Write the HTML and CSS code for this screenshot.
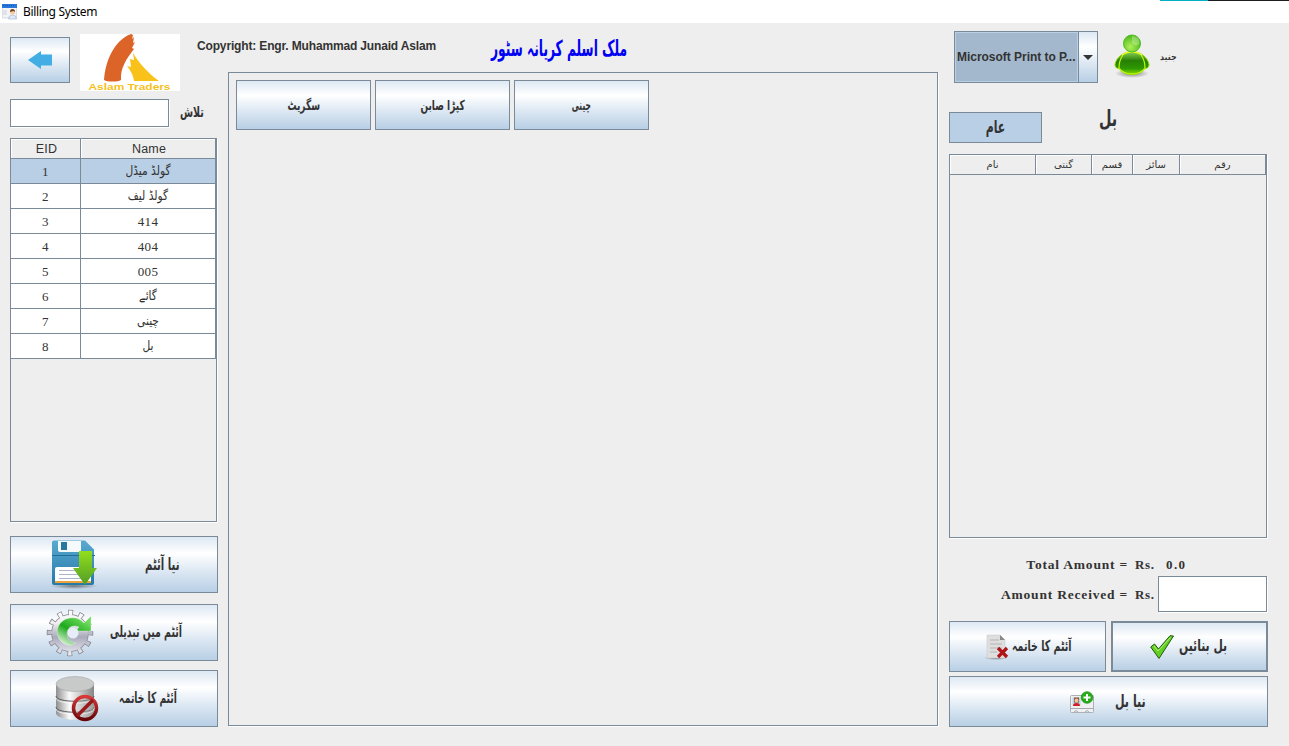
FILE: index.html
```html
<!DOCTYPE html>
<html lang="en">
<head>
<meta charset="utf-8">
<title>Billing System</title>
<link rel="stylesheet" href="styles.css">
</head>
<body>
<svg width="0" height="0" class="defs" aria-hidden="true">
  <defs>
    <linearGradient id="blue" x1="0" y1="0" x2="0" y2="1"><stop offset="0" stop-color="#5aa9d0"/><stop offset="1" stop-color="#237aa8"/></linearGradient>
    <linearGradient id="green" x1="0" y1="0" x2="0" y2="1"><stop offset="0" stop-color="#92de1c"/><stop offset="1" stop-color="#519d27"/></linearGradient>
    <linearGradient id="silver" x1="0" y1="0" x2="1" y2="0"><stop offset="0" stop-color="#8e8e8e"/><stop offset=".35" stop-color="#fafafa"/><stop offset=".6" stop-color="#d2d2d2"/><stop offset="1" stop-color="#858585"/></linearGradient>
    <linearGradient id="gear" gradientUnits="userSpaceOnUse" x1="0" y1="0" x2="0" y2="48"><stop offset="0" stop-color="#fff"/><stop offset=".3" stop-color="#eee"/><stop offset=".58" stop-color="#aaaabd"/><stop offset="1" stop-color="#f2f2f6"/></linearGradient>
    <linearGradient id="swirl" gradientUnits="userSpaceOnUse" x1="34" y1="8" x2="17" y2="36"><stop offset="0" stop-color="#6fdb60"/><stop offset=".5" stop-color="#1eaa1c"/><stop offset="1" stop-color="#e4f7e1"/></linearGradient>
    <linearGradient id="ban" x1="0" y1="0" x2="0" y2="1"><stop offset="0" stop-color="#d83a3a"/><stop offset="1" stop-color="#650508"/></linearGradient>
    <linearGradient id="body" x1="0" y1="0" x2="0" y2="1"><stop offset="0" stop-color="#8ed45a"/><stop offset=".4" stop-color="#277f05"/><stop offset=".75" stop-color="#2f9a00"/><stop offset="1" stop-color="#8de300"/></linearGradient>
    <radialGradient id="head" cx=".4" cy=".7" r=".7"><stop offset="0" stop-color="#b2ee5a"/><stop offset="1" stop-color="#48b91a"/></radialGradient>
    <radialGradient id="shade"><stop offset="0" stop-color="#444" stop-opacity=".65"/><stop offset="1" stop-color="#444" stop-opacity="0"/></radialGradient>
  </defs>
</svg>
<header class="titlebar">
  <svg class="app-icon" viewBox="0 0 16 16" width="16" height="16"><path d="M.5 1h14v13H.5z" fill="#f4f4f4" stroke="#c5cbd6" stroke-width=".6"/><path d="M0 0h15v4H0z" fill="#2878dc"/><path d="M1 1.500h12" stroke="#1455b8" stroke-dasharray="1 1"/><path d="M2 6v5M4 6v5" stroke="#cbd3df"/><path d="M6.500 15q0-4 4-4t4 4z" fill="#dce9fa" stroke="#92a7c6" stroke-width=".5"/><circle cx="10.500" cy="8.300" r="2.500" fill="#f3cda7"/><path d="M8 8q0-3 2.500-3T13 8l-1.500-1z" fill="#71401e"/></svg>
  <span class="title">Billing System</span>
  <i class="edge"></i>
</header>
<main class="app">
  <section class="left">
    <div class="brand">
      <button class="btn back"><svg viewBox="0 0 24 18" width="24" height="18"><path d="M0 9 13 0v3.500h11v11H13V18z" fill="#42aee4"/></svg></button>
      <svg class="logo" viewBox="0 0 100 57" width="100" height="57"><path fill="#fff" d="M0 0h100v57H0z"/><path d="M24 46c1-18 10-40 27-46l2 1-1 4 2-2-1 6 2-1-3 6 2 1c-7 9-14 19-13 31-3 2-14 2-17 0z" fill="#dd6428"/><path d="M54 47c-1-7-4-11-7-15l4 1-1-8 4 1-1-7c6 10 15 20 26 28z" fill="#f8c21b"/><text x="8.500" y="55.800" textLength="82" lengthAdjust="spacingAndGlyphs" class="logo-text">Aslam Traders</text></svg>
    </div>
    <div class="search"><input class="field" aria-label="تلاش"><label class="ur search-label">تلاش</label></div>
    <div class="pane items">
      <table class="item-table">
        <thead><tr><th class="id">EID</th><th>Name</th></tr></thead>
        <tbody>
          <tr class="selected"><td>1</td><td><span class="ur">گولڈ میڈل</span></td></tr>
          <tr><td>2</td><td><span class="ur">گولڈ لیف</span></td></tr>
          <tr><td>3</td><td>414</td></tr>
          <tr><td>4</td><td>404</td></tr>
          <tr><td>5</td><td>005</td></tr>
          <tr><td>6</td><td><span class="ur">گائے</span></td></tr>
          <tr><td>7</td><td><span class="ur">چینی</span></td></tr>
          <tr><td>8</td><td><span class="ur">بل</span></td></tr>
        </tbody>
      </table>
    </div>
    <div class="actions">
      <button class="btn act add"><svg viewBox="0 0 48 48" width="48" height="48"><ellipse cx="24" cy="45" rx="24" ry="3" fill="url(#shade)"/><path d="M4-.5h31l9 9V42q0 2-2 2H4q-2 0-2-2V1.500q0-2 2-2z" fill="url(#blue)"/><path d="M2 14.500h43" stroke="#216f99"/><path d="M8 0h23v9q0 2-2 2H10q-2 0-2-2z" fill="#f7fafb"/><path d="M11 1h6v8h-6z" fill="#27799f"/><path d="M7 26h34v15H5V28q0-2 2-2z" fill="#fff"/><path d="M5 40h36v2H5z" fill="#eda33a"/><path d="M9 29.500h25M9 33.500h25M9 37.500h25" stroke="#abb7c8"/><path d="M29 10h13v17h5L35 44 23 27h6z" fill="url(#green)"/></svg><span class="ur">نیا آئٹم</span></button>
      <button class="btn act edit"><svg viewBox="0 0 48 48" width="48" height="48"><g fill="none"><circle cx="24" cy="24" r="20.500" stroke="#85858f" stroke-width="5.500" stroke-dasharray="4.930 5.803" stroke-dashoffset="2.460"/><circle cx="24" cy="24" r="14" stroke="#85858f" stroke-width="9.500"/><circle cx="24" cy="24" r="20" stroke="url(#gear)" stroke-width="5" stroke-dasharray="3.500 6.972" stroke-dashoffset="1.750"/><circle cx="24" cy="24" r="14" stroke="url(#gear)" stroke-width="8"/></g><circle cx="24" cy="24" r="12" fill="url(#gear)"/><path d="M22 36C9 33 7 16 20 10q11-4 18 4l7-7v15H30l3-4c-7-3-12 1-12 7 0 5 4 9 9 9q-4 3-8 2z" fill="url(#swirl)" stroke="#fff" stroke-opacity=".5" stroke-width=".6"/><circle cx="27" cy="24" r="5.500" fill="#e5edf6"/></svg><span class="ur">آئٹم میں تبدیلی</span></button>
      <button class="btn act del"><svg viewBox="0 0 48 48" width="48" height="48"><path d="M4 10v28c0 9 38 9 38 0V10z" fill="url(#silver)"/><path d="M4 21c0 7 38 7 38 0M4 32c0 7 38 7 38 0" fill="none" stroke="#5f5f5f"/><path d="M4 23c0 7 38 7 38 0M4 34c0 7 38 7 38 0" fill="none" stroke="#fff" stroke-width=".7"/><ellipse cx="23" cy="9" rx="19" ry="7.500" fill="#c8caca" stroke="#9b9b9b" stroke-width=".5"/><circle cx="33" cy="33" r="11.500" fill="#ddd" fill-opacity=".25" stroke="url(#ban)" stroke-width="3.500"/><path d="m25 41 16-16" stroke="#98191b" stroke-width="3.500"/></svg><span class="ur">آئٹم کا خاتمہ</span></button>
    </div>
  </section>

  <section class="center">
    <div class="heading"><span class="copyright">Copyright: Engr. Muhammad Junaid Aslam</span><h1 class="ur store">ملک اسلم کریانہ سٹور</h1></div>
    <div class="pane catalog">
      <button class="btn cat"><span class="ur cat-a">سگریٹ</span></button>
      <button class="btn cat"><span class="ur cat-b">کپڑا صابن</span></button>
      <button class="btn cat"><span class="ur cat-c">چینی</span></button>
    </div>
  </section>

  <section class="right">
    <div class="user-row">
      <div class="combo"><span class="combo-value">Microsoft Print to P...</span><span class="combo-arrow"><svg viewBox="0 0 10 5" width="10" height="5"><path d="M0 0h10L5 5z" fill="#333"/></svg></span></div>
      <svg class="avatar" viewBox="0 0 36 44" width="36" height="44"><ellipse cx="18" cy="39.500" rx="17" ry="4.500" fill="url(#shade)"/><path d="M18 17.500c8 0 16 6 17 13 0 3-2 4-4 4-6 8-20 8-26 0-2 0-4-1-4-4 1-7 9-13 17-13z" fill="url(#body)" stroke="#8fd800"/><path d="M9 21c-3 4-4 8-4 13 6 8 20 8 26 0 0-5-1-9-4-13" fill="none" stroke="#c4fa00" stroke-width="1.200"/><path d="M8 21q10-6.500 20 0" fill="none" stroke="#e8ff20" stroke-width="1.300"/><circle cx="18" cy="9.500" r="8.500" fill="url(#head)" stroke="#4fbd20"/><path d="M18 9V2c6 0 8 4 7 8-2 2-4 2-7-1z" fill="#d8f5b9" opacity=".4"/></svg>
      <span class="ur user">جنید</span>
    </div>
    <div class="bill-row"><button class="type"><span class="ur">عام</span></button><span class="ur bill">بل</span></div>
    <div class="pane bill-pane">
      <div class="bill-head ur"><span>نام</span><span>گنتی</span><span>قسم</span><span>سائز</span><span>رقم</span></div>
    </div>
    <div class="totals">
      <div class="line"><span class="caption">Total Amount =</span><span class="rs">Rs.</span><span class="amount">0.0</span></div>
      <div class="line received"><span class="caption">Amount Received =</span><span class="rs">Rs.</span><input class="field" aria-label="Amount Received"></div>
    </div>
    <div class="bill-actions">
      <button class="btn remove"><svg viewBox="0 0 24 26" width="24" height="26"><ellipse cx="11" cy="24" rx="12" ry="2" fill="url(#shade)"/><path d="M2 1h13l5 5v18H2z" fill="#dedede" stroke="#c5c5c5" stroke-width=".5"/><path d="m15 1 5 5h-5z" fill="#888"/><path d="M5 6h9M5 10h12M5 14h12M5 18h7" stroke="#b4b4b4"/><path d="m13 14 9 9m0-9-9 9" stroke="#af1517" stroke-width="3.200"/></svg><span class="ur">آئٹم کا خاتمہ</span></button>
      <button class="btn make"><svg viewBox="0 0 24 24" width="24" height="24"><path d="M.7 12 4.500 9l4 5L20 .7l3.500.3L9 23.500z" fill="#62cf23" stroke="#245815"/><path d="m4 11 4 5L20.500 2.500" stroke="#b7ef75" fill="none"/></svg><span class="ur">بل بنائیں</span></button>
      <button class="btn new"><svg viewBox="0 0 24 22" width="24" height="22"><rect x=".5" y="4.500" width="23" height="17" rx="1" fill="#f0f0f1" stroke="#acb1b8"/><path d="M2.500 6.500h8v8h-8z" fill="#b7d1ee"/><path d="M4 6.500h5v5H4z" fill="#8a5630"/><circle cx="6.500" cy="9.500" r="2" fill="#f3c39a"/><path d="M3 15q0-3 3.500-3T10 15z" fill="#cf2020"/><path d="M1 17.500h22M4 21q2-3 4 0M15 21q2-3 4 0" stroke="#a4a9af" fill="none"/><circle cx="17" cy="6.500" r="5.800" fill="#24ad17" stroke="#168611" stroke-width=".7"/><path d="M17 3v7M13.500 6.500h7" stroke="#fff" stroke-width="2"/></svg><span class="ur">نیا بل</span></button>
    </div>
  </section>
</main>
</body>
</html>
```

FILE: styles.css
```css
* { box-sizing: border-box; }
body { margin: 0; width: 1289px; height: 746px; overflow: hidden; background: #eee; color: #333; font-family: "Liberation Sans", Arial, sans-serif; font-size: 12px; }
svg { display: block; flex: none; overflow: visible; }
.defs { position: absolute; }
.ur { font-family: "DejaVu Sans", sans-serif; direction: rtl; unicode-bidi: isolate; white-space: nowrap; }
button { font: inherit; color: inherit; padding: 0; margin: 0; }
.btn { display: flex; align-items: center; justify-content: center; border: 1px solid #7a8a99; background: linear-gradient(#dde8f3 0%, #fff 30%, #dde8f3 62%, #b8cfe5 100%); }
.field { border: 1px solid #7a8a99; background: #fff; box-shadow: 1px 1px 0 #fff; padding: 2px; margin: 0; border-radius: 0; }
.pane { border: 1px solid #7a8a99; box-shadow: 1px 1px 0 #fff; }

.titlebar { position: relative; display: flex; align-items: center; height: 23px; padding-left: 2px; background: #fff; }
.title { margin-left: 5px; color: #000; font: 12px "Noto Sans", sans-serif; letter-spacing: -.34px; }
.edge { position: absolute; right: 0; top: 0; width: 129px; height: 1px; background: linear-gradient(90deg, #00b1c5 48px, #1c1c1c 48px); }

.app { display: grid; grid-template-columns: 208px 710px 319px; column-gap: 10.500px; padding-left: 10px; }
.center { margin-left: -.5px; width: 710px; }

.brand { display: flex; padding-top: 11px; height: 76px; gap: 10px; }
.back { width: 60px; height: 46px; margin-top: 3px; }
.logo-text { font: bold 8.500px "Liberation Sans", sans-serif; fill: #f6c11c; }
.search { display: flex; align-items: center; height: 28px; }
.search .field { width: 159px; height: 28px; }
.search-label { margin: -2px 0 0 11px; font-size: 13px; font-weight: bold; line-height: 20px; transform: scale(.73, 1.15); transform-origin: left center; }
.items { width: 207px; height: 384px; margin-top: 11px; }
.item-table { width: 205px; border-collapse: separate; border-spacing: 0; table-layout: fixed; }
.item-table th { height: 20px; padding: 2px 0 0 2px; font-size: 12.500px; letter-spacing: .2px; font-weight: normal; line-height: 17px; border-right: 1px solid #7a8a99; border-bottom: 1px solid #7a8a99; box-shadow: inset 1px 1px 0 #fff; }
.item-table .id { width: 70px; }
.item-table td { height: 25px; padding: 1px 0 0; text-align: center; font-family: "Liberation Serif", serif; font-size: 13px; line-height: 22px; letter-spacing: .4px; background: #fff; border-right: 1px solid #7a8a99; border-bottom: 1px solid #7a8a99; }
.item-table .ur { display: block; margin-top: -1px; letter-spacing: 0; font-size: 13px; transform: scaleX(.82); }
.item-table .selected td { background: #b8cfe5; }
.actions { display: grid; grid-template-rows: 68px 66px 57px; margin-top: 14px; }
.act { height: 57px; justify-content: flex-start; font-size: 14px; font-weight: bold; }
.act .ur { transform: scale(.72, 1.2); transform-origin: left center; }
.add { padding-left: 39px; }
.add span { margin: -2px 0 0 47px; }
.edit { padding-left: 35px; }
.edit span { margin: -2px 0 0 16px; font-size: 13px; }
.del { padding-left: 41px; }
.del span { margin: -2px 0 0 19px; font-size: 12.700px; }

.heading { display: flex; height: 49px; }
.copyright { flex: none; margin-left: -31px; padding-top: 16px; width: 240px; font-weight: bold; font-size: 12px; letter-spacing: -.155px; white-space: nowrap; }
.store { margin: 11px 0 0 54px; color: #0000f5; font-size: 17px; line-height: 30px; transform: scale(.72, 1.3); transform-origin: left center; }
.catalog { display: flex; gap: 4px; width: 710px; height: 654px; padding: 7px; }
.cat { width: 135px; height: 50px; font-size: 12px; font-weight: bold; }
.cat .ur { transform: scale(.75, 1.15); }
.cat .cat-c { transform: scale(.62, 1.15); }

.user-row { display: flex; align-items: center; height: 52px; margin: 8px 0 0 5px; }
.combo { display: flex; width: 144px; height: 52px; border: 1px solid #7a8a99; }
.combo-value { width: 124px; padding-left: 1px; border: 1px solid #b8cfe5; background: #a3b8cc; font-weight: bold; letter-spacing: -.03px; line-height: 49px; white-space: nowrap; }
.combo-arrow { display: flex; align-items: center; justify-content: center; width: 19px; border-left: 1px solid #7a8a99; background: linear-gradient(#dde8f3, #fff 30%, #dde8f3 62%, #b8cfe5); }
.avatar { margin: -3px 0 0 16px; }
.user { margin-left: 10px; font-size: 9px; font-weight: bold; transform: scaleX(.88); transform-origin: left center; }
.bill-row { display: flex; height: 60px; margin-top: 11px; }
.type { width: 93px; height: 31px; margin-top: 18px; border: 1px solid #7a8a99; background: #b8cfe5; font-size: 16px; font-weight: bold; line-height: 28px; }
.type .ur { display: block; transform: scale(.68, 1.1); }
.bill { margin: 13px 0 0 57px; font-size: 18px; font-weight: bold; line-height: 28px; transform: scale(.8, 1.25); transform-origin: left center; }
.bill-pane { width: 318px; height: 384px; }
.bill-head { display: grid; direction: ltr; grid-template-columns: 86px 56px 41px 47px 86px; height: 20px; width: 316px; font-size: 10px; line-height: 20px; text-align: center; border-bottom: 1px solid #7a8a99; }
.bill-head span { height: 19px; border-right: 1px solid #7a8a99; box-shadow: inset 1px 1px 0 #fff; }
.totals { height: 83px; padding-top: 12px; font-family: "Liberation Serif", serif; font-size: 13px; font-weight: bold; letter-spacing: .62px; }
.line { display: flex; align-items: center; height: 26px; padding-top: 3px; white-space: nowrap; }
.received { height: 36px; padding-top: 0; }
.caption { width: 179px; text-align: right; font-size: 13.500px; letter-spacing: .8px; }
.rs { width: 24px; margin-left: 7px; }
.amount { margin-left: 7px; letter-spacing: 1.400px; }
.received .caption, .received .rs { padding-top: 2px; }
.received .field { width: 109px; height: 36px; margin-left: -1px; }
.bill-actions { display: grid; grid-template-columns: 157px 157px; gap: 4px 5px; grid-template-rows: 51px 51px; }
.bill-actions .ur { font-weight: bold; margin-top: -2px; transform: scale(.79, 1.25); transform-origin: left center; }
.bill-actions .btn { justify-content: flex-start; }
.remove { padding-left: 35px; gap: 3px; font-size: 12px; }
.make { padding-left: 37px; border-width: 2px; gap: 5px; font-size: 13px; }
.bill-actions .make .ur { transform: scale(.83, 1.25); }
.new { grid-column: 1 / -1; width: 319px; padding-left: 120px; gap: 21px; font-size: 14px; }
```
